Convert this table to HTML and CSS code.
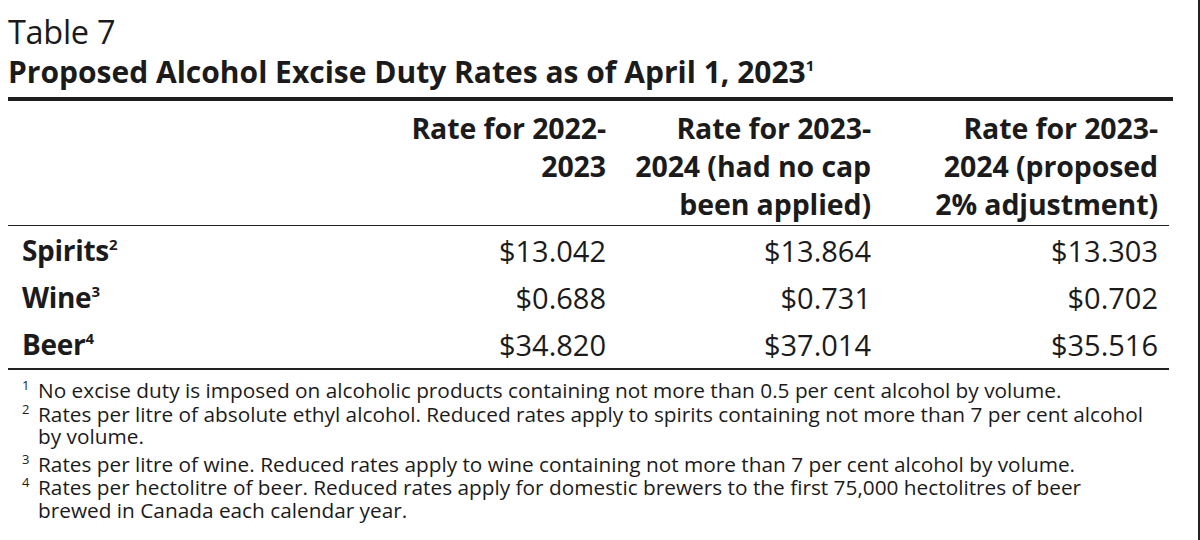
FILE: index.html
```html
<!DOCTYPE html>
<html>
<head>
<meta charset="utf-8">
<link rel="stylesheet" href="styles.css">
</head>
<body>
<div class="page">
  <div class="label">Table 7</div>
  <h1 class="title">Proposed Alcohol Excise Duty Rates as of April 1, 2023<sup>1</sup></h1>
  <table class="rates">
    <thead>
      <tr>
        <th class="name"></th>
        <th class="c1">Rate for 2022-<br>2023</th>
        <th class="c2">Rate for 2023-<br>2024 (had no cap<br>been applied)</th>
        <th class="c3">Rate for 2023-<br>2024 (proposed<br>2% adjustment)</th>
      </tr>
    </thead>
    <tbody>
      <tr><td class="name">Spirits<sup>2</sup></td><td>$13.042</td><td>$13.864</td><td>$13.303</td></tr>
      <tr><td class="name">Wine<sup>3</sup></td><td>$0.688</td><td>$0.731</td><td>$0.702</td></tr>
      <tr><td class="name">Beer<sup>4</sup></td><td>$34.820</td><td>$37.014</td><td>$35.516</td></tr>
    </tbody>
  </table>
  <div class="notes">
    <p class="note"><sup>1</sup>No excise duty is imposed on alcoholic products containing not more than 0.5 per cent alcohol by volume.</p>
    <p class="note"><sup>2</sup>Rates per litre of absolute ethyl alcohol. Reduced rates apply to spirits containing not more than 7 per cent alcohol by volume.</p>
    <p class="note spaced"><sup>3</sup>Rates per litre of wine. Reduced rates apply to wine containing not more than 7 per cent alcohol by volume.</p>
    <p class="note"><sup>4</sup>Rates per hectolitre of beer. Reduced rates apply for domestic brewers to the first 75,000 hectolitres of beer brewed in Canada each calendar year.</p>
  </div>
</div>
</body>
</html>
```
FILE: styles.css
```css
html, body {
  margin: 0;
  padding: 0;
  background: #ffffff;
}
body {
  font-family: "Open Sans", "Noto Sans", sans-serif;
  color: #1b1b1b;
  width: 1200px;
  height: 540px;
  overflow: hidden;
  border-right: 2px solid #222;
  box-sizing: border-box;
}
.page {
  padding: 12px 0 0 8px;
  width: 1165px;
}
.label {
  font-size: 32.5px;
  font-weight: 400;
  line-height: 40px;
  letter-spacing: -0.3px;
}
.title {
  margin: 0;
  font-size: 30px;
  font-weight: 700;
  line-height: 40px;
  letter-spacing: 0;
  padding-bottom: 5px;
  border-bottom: 4px solid #1e1e1e;
}
.title sup {
  font-size: 15px;
  vertical-align: 12px;
  line-height: 0;
  letter-spacing: 0;
}
.rates {
  width: 1161px;
  border-collapse: collapse;
  table-layout: fixed;
}
.rates th, .rates td {
  box-sizing: border-box;
  padding: 0;
  text-align: right;
  font-size: 28.5px;
}
.rates th {
  font-weight: 700;
  line-height: 38px;
  padding-top: 8px;
  padding-bottom: 2px;
  vertical-align: top;
  border-bottom: 1.5px solid #222;
  letter-spacing: -0.1px;
}
.rates th.name { width: 358px; }
.rates th.c1 { width: 240px; }
.rates th.c2 { width: 265px; }
.rates th.c3 { width: 298px; padding-right: 11px; }
.rates td {
  font-weight: 400;
  line-height: 47px;
  font-size: 29px;
}
.rates tbody tr:first-child td { padding-top: 1px; }
.rates tbody tr:last-child td {
  border-bottom: 2.5px solid #222;
}
.rates td:last-child { padding-right: 11px; }
.rates td.name {
  text-align: left;
  font-weight: 700;
  font-size: 28px;
  padding-left: 14px;
  letter-spacing: -0.3px;
}
.rates td.name sup {
  font-size: 15px;
  vertical-align: 11px;
  line-height: 0;
  letter-spacing: 0;
}
.notes {
  padding: 9px 21px 0 14px;
}
.note {
  margin: 1px 0 0;
  font-size: 20.8px;
  line-height: 22.6px;
  padding-left: 16px;
  text-indent: -16px;
}
.note:first-child { margin-top: 0; }
.note.spaced { margin-top: 5px; }
.note sup {
  font-size: 13px;
  vertical-align: 8px;
  line-height: 0;
  display: inline-block;
  width: 16px;
  text-indent: 0;
  text-align: left;
}
```
